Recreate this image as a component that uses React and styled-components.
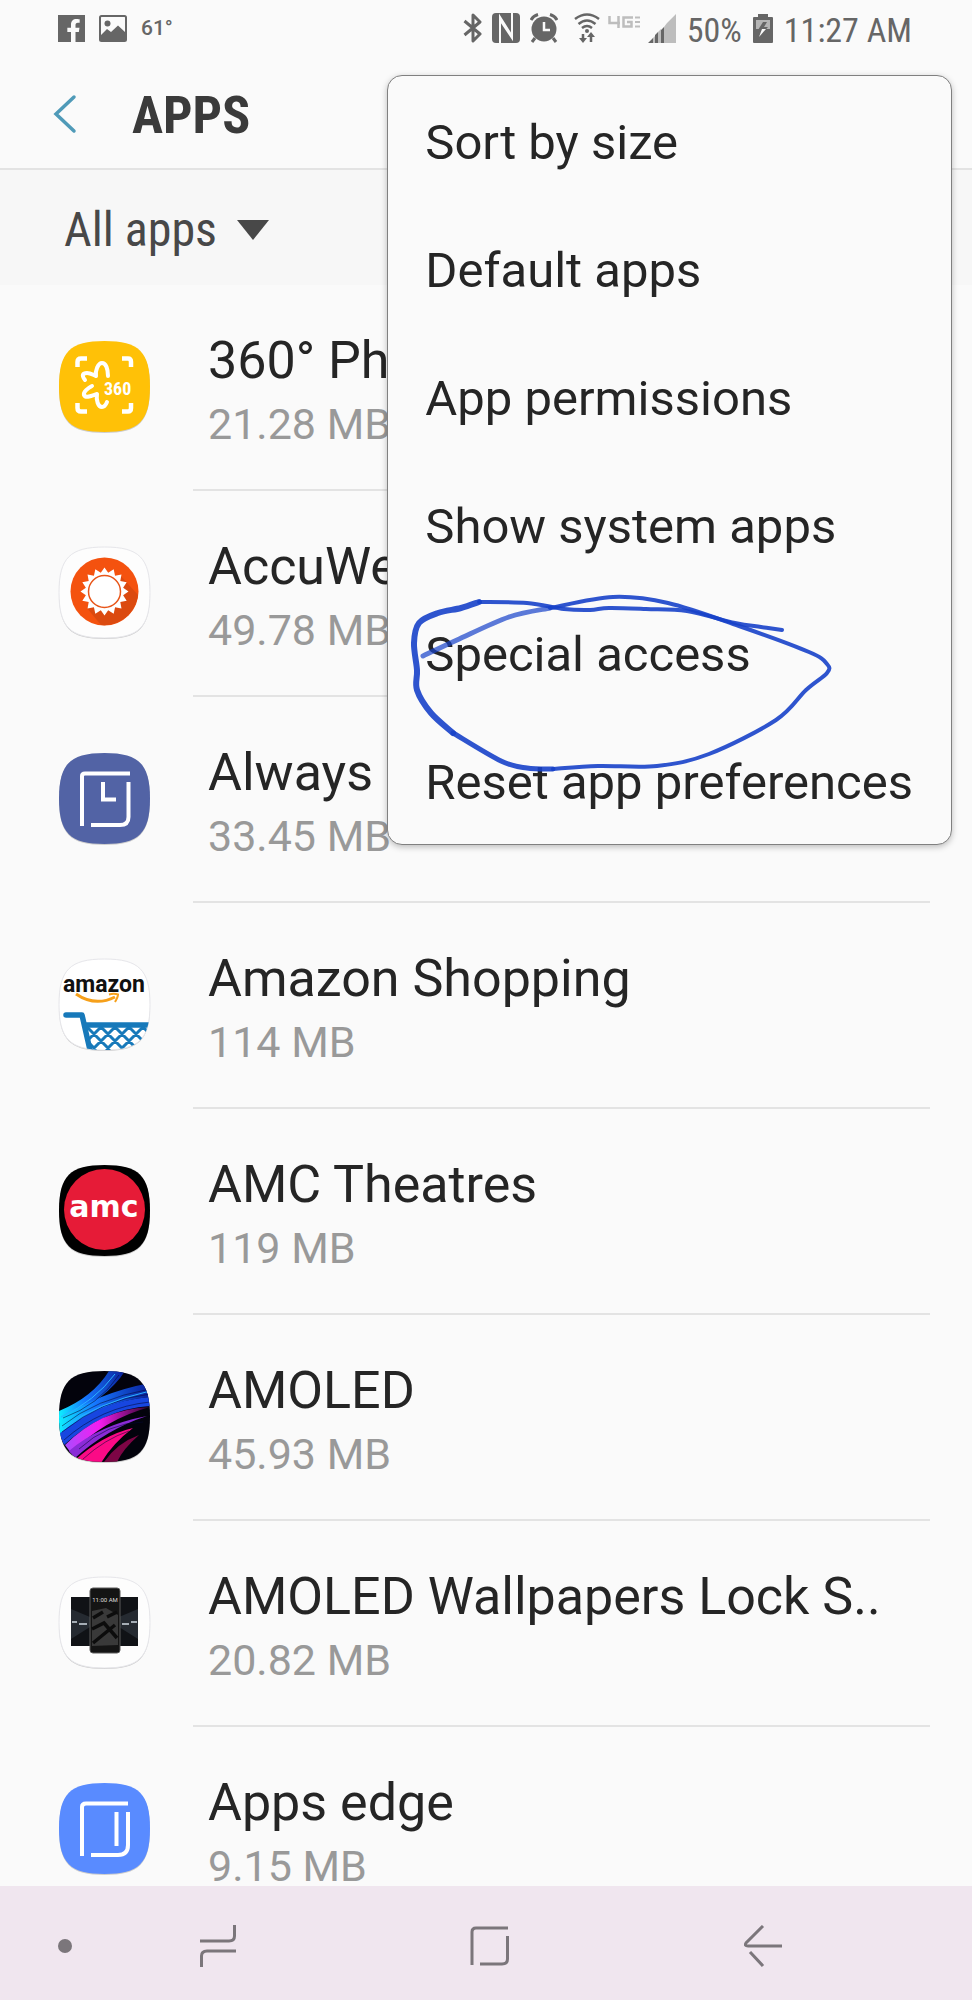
import React from 'react';
import styled, { createGlobalStyle } from 'styled-components';
import { FaFacebookF } from 'react-icons/fa';

const GlobalStyle = createGlobalStyle`
  * {
    box-sizing: border-box;
  }

  body {
    margin: 0;
    background-color: #fafafa;
    font-family: Roboto, "Liberation Sans", sans-serif;
    color: #252525;
  }

  button {
    border: 0;
    padding: 0;
    background: none;
    font: inherit;
    color: inherit;
    text-align: left;
    cursor: pointer;
  }
`;

const Screen = styled.div`
  position: relative;
  display: flex;
  flex-direction: column;
  height: 100vh;
  overflow: hidden;
`;

const StatusBar = styled.div`
  display: flex;
  align-items: center;
  justify-content: space-between;
  flex-shrink: 0;
  height: 56px;
  padding: 0 60px 0 58px;
  color: #666;
`;

const StatusGroup = styled.div`
  display: flex;
  align-items: center;
  gap: ${(props) => props.$gap};
`;

const FacebookBadge = styled.span`
  display: flex;
  align-items: flex-end;
  justify-content: flex-end;
  width: 27px;
  height: 27px;
  background-color: #666;
  color: #fafafa;
  overflow: hidden;
`;

const Temperature = styled.span`
  font-size: 21px;
  font-weight: 500;
`;

const StatusText = styled.span`
  padding-top: 3px;
  font-family: "Roboto Condensed", Roboto, sans-serif;
  font-size: 34px;
  line-height: 40px;
`;

const Header = styled.header`
  display: flex;
  align-items: center;
  gap: 55px;
  flex-shrink: 0;
  height: 114px;
  padding: 4px 52px 0;
  border-bottom: 2px solid #e3e3e3;
`;

const BackButton = styled.button`
  display: flex;
`;

const Title = styled.h1`
  margin: 0;
  padding-top: 4px;
  font-family: "Roboto Condensed", Roboto, sans-serif;
  font-size: 52px;
  font-weight: 700;
  line-height: 60px;
  color: #3a3a3a;
`;

const FilterBar = styled.div`
  display: flex;
  align-items: center;
  flex-shrink: 0;
  height: 115px;
  padding: 4px 64px 0;
  background-color: #f7f7f7;
`;

const FilterButton = styled.button`
  display: flex;
  align-items: center;
  gap: 20px;
  font-family: "Roboto Condensed", Roboto, sans-serif;
  font-size: 48px;
  line-height: 60px;
  color: #484848;
`;

const AppList = styled.ul`
  flex: 1;
  min-height: 0;
  margin: 0;
  padding: 0;
  list-style: none;
  overflow: hidden;
`;

const AppRow = styled.li`
  display: flex;
  height: 206px;
  padding: 0 42px 0 54px;
`;

const IconCell = styled.div`
  flex: 0 0 139px;
  padding-top: 52px;
`;

const AppText = styled.div`
  flex: 1;
  min-width: 0;
  padding: 44px 0 0 15px;
  border-bottom: 2px solid #e3e3e3;
  white-space: nowrap;
`;

const AppName = styled.div`
  font-size: 52px;
  line-height: 64px;
`;

const AppSize = styled.div`
  margin-top: 11px;
  font-size: 43px;
  line-height: 40px;
  color: #999;
`;

const Menu = styled.div`
  position: absolute;
  top: 75px;
  right: 20px;
  padding: 0 37px;
  border: 1px solid #808080;
  border-radius: 15px;
  background-color: #fafafa;
  box-shadow: 0 2px 6px rgba(0, 0, 0, 0.25);
`;

const MenuItem = styled.button`
  display: block;
  width: 100%;
  height: 128px;
  padding: 5px 1px 0 0;
  font-size: 49px;
  line-height: 60px;
  white-space: nowrap;
`;

const Scribble = styled.svg`
  position: absolute;
  top: 0;
  left: 0;
  pointer-events: none;
`;

const NavBar = styled.nav`
  display: grid;
  grid-template-columns: 82px 1fr 1fr 1fr 73px;
  align-items: center;
  flex-shrink: 0;
  height: 114px;
  padding-top: 6px;
  background-color: #f0e6ef;
`;

const NavButton = styled.button`
  display: flex;
  justify-content: ${(props) => (props.$end ? 'flex-end' : 'center')};
  padding-right: ${(props) => (props.$end ? '10px' : '0')};
`;

const squircle =
  'M45.5 0C80 0 91 11 91 45.5S80 91 45.5 91 0 80 0 45.5 11 0 45.5 0Z';

function AppIcon({ id, fill, outline, children }) {
  return (
    <svg width="100" height="100" viewBox="-5 -4 100 100" aria-hidden="true">
      <defs>
        <clipPath id={id}>
          <path d={squircle} />
        </clipPath>
      </defs>
      <path d={squircle} fill="#000" opacity="0.18" transform="translate(0 1)" />
      <path d={squircle} fill={fill} stroke={outline ? '#e6e6ea' : 'none'} />
      <g clipPath={`url(#${id})`}>{children}</g>
    </svg>
  );
}

function PhotoIcon() {
  return (
    <AppIcon id="photo" fill="#ffc107">
      <g fill="none" stroke="#fff" strokeWidth="4.5">
        <path d="M18.500 26V21Q18.500 17.500 22 17.500H28M63 17.500H69Q72 17.500 72 21V26M72 62V67Q72 70.500 69 70.500H63M28 70.500H22Q18.500 70.500 18.500 67V62" />
        <path
          strokeLinecap="round"
          strokeLinejoin="round"
          strokeWidth="4"
          d="M26 39C22 34 24 32 28 32C32 32 34 34 37 35C36 30 39 22 43 22C47 22 49 28 49 35M33 45C29 47 24 51 25 54C27 58 34 54 38 53C37 59 39 66 43 66Q46 66 48 61"
        />
      </g>
      <text x="45" y="54" fontSize="18" fontWeight="700" fill="#fff" fontFamily="Roboto Condensed, Roboto, sans-serif">
        360
      </text>
    </AppIcon>
  );
}

function WeatherIcon() {
  const rays = [];
  for (let i = 0; i < 32; i++) {
    const r = i % 2 ? 19 : 24;
    const a = (i * Math.PI) / 16;
    rays.push(`${45.5 + r * Math.sin(a)},${44.5 - r * Math.cos(a)}`);
  }
  return (
    <AppIcon id="weather" fill="#fdfdfd" outline>
      <circle cx="45.500" cy="44.500" r="34" fill="#f4520f" />
      <path d="M61 28L79 48A34 34 0 0 1 42 78L28 61Z" fill="#db4a10" />
      <polygon points={rays.join(' ')} fill="#fff" />
      <circle cx="45.500" cy="44.500" r="16" fill="#fff" stroke="#e8561a" strokeWidth="1.500" />
    </AppIcon>
  );
}

function DisplayIcon() {
  return (
    <AppIcon id="display" fill="#5263a5">
      <g fill="none" stroke="#fff" strokeWidth="4">
        <path d="M23 73V23Q23 20.500 26 20.500H71M69.500 29V64Q69.500 72 61 72H32M44 29V46.500H57" />
      </g>
    </AppIcon>
  );
}

function AmazonIcon() {
  return (
    <AppIcon id="amazon" fill="#fff" outline>
      <text x="4" y="33" fontSize="23" fontWeight="700" fill="#111" fontFamily="Roboto, sans-serif">
        amazon
      </text>
      <path d="M17 35Q36 48 56 38" fill="none" stroke="#f6a01a" strokeWidth="3" />
      <path d="M50 35.500Q55 34 59 35.500Q59 38 56 43" fill="none" stroke="#f6a01a" strokeWidth="2" />
      <path d="M7 56H23L31 91M27 66H92" fill="none" stroke="#1779ba" strokeWidth="5.500" strokeLinecap="round" strokeLinejoin="round" />
      <path
        d="M28 68L51 91M42 68L65 91M56 68L79 91M70 68L91 89M84 68L91 75M42 68L30 80M56 68L33 91M70 68L47 91M84 68L61 91M92 74L75 91M30 84L37 91"
        fill="none"
        stroke="#1779ba"
        strokeWidth="3"
      />
    </AppIcon>
  );
}

function AmcIcon() {
  return (
    <AppIcon id="amc" fill="#000">
      <circle cx="45.500" cy="44.500" r="40.500" fill="#e61b37" />
      <text x="45" y="52" fontSize="30" fontWeight="700" fill="#fff" textAnchor="middle" fontFamily="DejaVu Sans, sans-serif">
        amc
      </text>
    </AppIcon>
  );
}

function AmoledIcon() {
  return (
    <AppIcon id="amoled" fill="#03030c">
      <defs>
        <linearGradient id="blue" x1="0" x2="1">
          <stop offset="0" stopColor="#0df0ff" />
          <stop offset="0.4" stopColor="#1676ff" />
          <stop offset="1" stopColor="#0a1f98" />
        </linearGradient>
        <linearGradient id="pink" x1="0" x2="1">
          <stop offset="0" stopColor="#a84cff" />
          <stop offset="0.4" stopColor="#f61cf0" />
          <stop offset="1" stopColor="#2a0428" />
        </linearGradient>
      </defs>
      <path d="M0 40Q34 26 50 0H66Q50 26 0 52Z" fill="url(#blue)" />
      <path d="M0 49Q38 22 91 12V26Q40 30 0 66Z" fill="url(#blue)" />
      <path d="M0 63Q40 30 91 26V35Q44 38 5 74Z" fill="#1746e0" />
      <path d="M6 74Q42 38 91 36Q46 48 12 82Z" fill="url(#pink)" />
      <path d="M10 80Q40 54 88 45Q48 58 16 87Z" fill="#8a2bd6" />
      <path d="M16 89Q44 64 74 57Q54 72 42 92Z" fill="#fb0a86" />
      <path d="M45 91Q58 72 80 64Q64 78 58 91Z" fill="#7d0545" />
      <g fill="none" stroke="#050a35" opacity="0.55">
        <path d="M4 47Q40 34 60 4M3 55Q36 28 91 18M3 61Q44 28 91 23M5 69Q42 36 91 31M20 78Q48 52 84 51M24 88Q46 68 70 60" />
      </g>
      <path d="M2 46Q36 30 56 3M4 57Q38 32 91 20" fill="none" stroke="#2bb4ff" />
    </AppIcon>
  );
}

function WallpaperIcon() {
  return (
    <AppIcon id="wallpaper" fill="#fdfdfd" outline>
      <rect x="12" y="20" width="67" height="49" fill="#101216" />
      <path d="M12 32L31 40V50L12 62M79 32L60 40V50L79 62" fill="#252a31" />
      <path d="M13 45H18M20 47H28M63 47H70M72 45H78" stroke="#a5adb5" strokeWidth="2" />
      <rect x="31" y="11" width="30" height="65" rx="3" fill="#141414" stroke="#5a5a5a" />
      <path d="M33 34L47 31L59 38V68L33 69Z" fill="#393939" />
      <path d="M33 52L45 46L58 61M34 66L56 48M34 41L44 35M48 40L58 35" fill="none" stroke="#0c0c0c" strokeWidth="3.500" />
      <text x="46" y="25" fontSize="6" fill="#ddd" textAnchor="middle" fontFamily="Roboto, sans-serif">
        11:00 AM
      </text>
    </AppIcon>
  );
}

function EdgeIcon() {
  return (
    <AppIcon id="edge" fill="#598bff">
      <path
        d="M23 73V24Q23 20.500 27 20.500H69M69 29V62Q69 72 59 72H32M57.500 29V63"
        fill="none"
        stroke="#fff"
        strokeWidth="4"
      />
    </AppIcon>
  );
}

function PictureIcon() {
  return (
    <svg width="28" height="27" viewBox="0 0 28 27">
      <rect x="1" y="1" width="26" height="25" rx="1.500" fill="none" stroke="#666" strokeWidth="2" />
      <circle cx="8.500" cy="8.500" r="3" fill="#666" />
      <path d="M2 20L8 14L12 17L19 10.500L26 17V26H2Z" fill="#666" />
    </svg>
  );
}

function BluetoothIcon() {
  return (
    <svg width="19" height="30" viewBox="0 0 19 30">
      <path
        d="M1.500 8L17 21L10 28V2L17 9L1.500 22"
        fill="none"
        stroke="#666"
        strokeWidth="3"
        strokeLinejoin="round"
      />
    </svg>
  );
}

function NfcIcon() {
  return (
    <svg width="28" height="30" viewBox="0 0 28 30">
      <rect width="28" height="30" rx="4" fill="#666" />
      <path d="M8 30V4L20 23M20 0V25L8 7" fill="none" stroke="#fafafa" strokeWidth="2" />
    </svg>
  );
}

function AlarmIcon() {
  return (
    <svg width="28" height="30" viewBox="0 0 28 30">
      <circle cx="14" cy="16" r="12.500" fill="#666" />
      <path d="M1 7Q3 3 8 1.500M20 1.500Q25 3 27 7M5 25L2 29M23 25L26 29" fill="none" stroke="#666" strokeWidth="3" />
      <path d="M14 9V17H20" fill="none" stroke="#fafafa" strokeWidth="2.500" />
    </svg>
  );
}

function WifiIcon() {
  return (
    <svg width="26" height="30" viewBox="0 0 26 30">
      <g fill="none" stroke="#666" strokeWidth="2.500">
        <path d="M1 6Q13 -3 25 6M4.500 11Q13 4 21.500 11M8 15Q13 11 18 15" />
        <path d="M9 21V27M17 23V29" />
      </g>
      <circle cx="13" cy="18" r="2" fill="#666" />
      <path d="M5 25H13L9 30ZM13 24H21L17 19Z" fill="#666" />
    </svg>
  );
}

function NetworkIcon() {
  return (
    <svg width="32" height="30" viewBox="0 0 32 30">
      <g fill="none" stroke="#bdbdbd" strokeWidth="2.500">
        <path d="M1.500 3V10H12M10.500 3V15M25 4.500H15.500V13.500H23.500V9H19" />
        <path d="M27 4.500H32M27 9H32M27 13.500H32" strokeWidth="2" />
      </g>
    </svg>
  );
}

function SignalIcon() {
  return (
    <svg width="28" height="29" viewBox="0 0 28 29">
      <path d="M0 29L5 24V29ZM7 29V21L10 18V29ZM13 29V16L16 13V29Z" fill="#666" />
      <path d="M5 24L7 22V29H5ZM10 18L13 15V29H10ZM16 13L19 9V29H16ZM19 9L28 0V29H19Z" fill="#bdbdbd" />
    </svg>
  );
}

function BatteryIcon() {
  return (
    <svg width="20" height="29" viewBox="0 0 20 29">
      <path d="M0 4Q0 3 1 3H5V0H15V3H19Q20 3 20 4V28Q20 29 19 29H1Q0 29 0 28Z" fill="#666" />
      <path d="M3 6H17V15H3Z" fill="#b5b5b5" />
      <path d="M10 8L5 16H9L6 23L15 13H11L14 8Z" fill="#666" />
      <path d="M9 15H13L6 23Z" fill="#fafafa" />
    </svg>
  );
}

// pen strokes, in the coordinates of the menu
const strokes = [
  { width: 4, points: [[396, 554], [375, 551], [349, 547], [301, 535], [260, 533], [223, 532], [204, 534], [178, 533], [141, 527], [93, 526]] },
  { width: 6, points: [[93, 526], [75, 532], [52, 537], [33, 547], [28, 567], [31, 594], [31, 614], [45, 637], [67, 657]] },
  { width: 5, points: [[67, 657], [115, 685], [141, 692], [167, 693]] },
  { width: 4, points: [[167, 693], [212, 690], [271, 690], [323, 678], [390, 644], [420, 614], [441, 597], [441, 588], [423, 576], [353, 550], [282, 527], [227, 521], [164, 532]] },
  { width: 5, faint: true, points: [[164, 532], [123, 541], [71, 564], [37, 580]] },
];

function toPath(points) {
  let d = `M${points[0]}`;
  for (let i = 0; i < points.length - 1; i++) {
    const p0 = points[i - 1] || points[i];
    const p1 = points[i];
    const p2 = points[i + 1];
    const p3 = points[i + 2] || p2;
    d += `C${p1[0] + (p2[0] - p0[0]) / 6},${p1[1] + (p2[1] - p0[1]) / 6} `;
    d += `${p2[0] - (p3[0] - p1[0]) / 6},${p2[1] - (p3[1] - p1[1]) / 6} ${p2}`;
  }
  return d;
}

const apps = [
  { name: '360° Photo', size: '21.28 MB', Icon: PhotoIcon },
  { name: 'AccuWeather', size: '49.78 MB', Icon: WeatherIcon },
  { name: 'Always On', size: '33.45 MB', Icon: DisplayIcon },
  { name: 'Amazon Shopping', size: '114 MB', Icon: AmazonIcon },
  { name: 'AMC Theatres', size: '119 MB', Icon: AmcIcon },
  { name: 'AMOLED', size: '45.93 MB', Icon: AmoledIcon },
  { name: 'AMOLED Wallpapers Lock S..', size: '20.82 MB', Icon: WallpaperIcon },
  { name: 'Apps edge', size: '9.15 MB', Icon: EdgeIcon },
];

const menuItems = [
  'Sort by size',
  'Default apps',
  'App permissions',
  'Show system apps',
  'Special access',
  'Reset app preferences',
];

function App() {
  return (
    <>
      <GlobalStyle />
      <Screen>
        <StatusBar>
          <StatusGroup $gap="14px">
            <FacebookBadge>
              <FaFacebookF size={23} />
            </FacebookBadge>
            <PictureIcon />
            <Temperature>61°</Temperature>
          </StatusGroup>
          <StatusGroup $gap="11px">
            <StatusGroup $gap="16px">
              <StatusGroup $gap="10px">
                <BluetoothIcon />
                <NfcIcon />
                <AlarmIcon />
              </StatusGroup>
              <StatusGroup $gap="8px">
                <WifiIcon />
                <NetworkIcon />
                <SignalIcon />
              </StatusGroup>
            </StatusGroup>
            <StatusText>50%</StatusText>
            <BatteryIcon />
            <StatusText>11:27 AM</StatusText>
          </StatusGroup>
        </StatusBar>
        <Header>
          <BackButton aria-label="Back">
            <svg width="25" height="40" viewBox="0 0 25 40">
              <path d="M22 3L4 20L22 37" fill="none" stroke="#4f9ab8" strokeWidth="3.500" strokeLinecap="round" />
            </svg>
          </BackButton>
          <Title>APPS</Title>
        </Header>
        <FilterBar>
          <FilterButton>
            All apps
            <svg width="32" height="20" viewBox="0 0 32 20">
              <path d="M0 0H32L16 20Z" fill="#484848" />
            </svg>
          </FilterButton>
        </FilterBar>
        <AppList>
          {apps.map(({ name, size, Icon }) => (
            <AppRow key={name}>
              <IconCell>
                <Icon />
              </IconCell>
              <AppText>
                <AppName>{name}</AppName>
                <AppSize>{size}</AppSize>
              </AppText>
            </AppRow>
          ))}
        </AppList>
        <NavBar>
          <NavButton $end aria-label="Hide navigation bar">
            <svg width="14" height="14" viewBox="0 0 14 14">
              <circle cx="7" cy="7" r="7" fill="#7b767b" />
            </svg>
          </NavButton>
          <NavButton aria-label="Recent apps">
            <svg width="38" height="42" viewBox="0 0 38 42" fill="none" stroke="#7b767b" strokeWidth="3">
              <path d="M35.500 0V11Q35.500 16 30 16H1M2.500 42V31Q2.500 26 8 26H37" />
            </svg>
          </NavButton>
          <NavButton aria-label="Home">
            <svg width="40" height="40" viewBox="0 0 40 40" fill="none" stroke="#7b767b" strokeWidth="3">
              <path d="M2 39V6Q2 2 6 2H38M37.500 10V33Q37.500 38 32 38H10" />
            </svg>
          </NavButton>
          <NavButton aria-label="Back">
            <svg width="38" height="42" viewBox="0 0 38 42" fill="none" stroke="#7b767b" strokeWidth="3">
              <path d="M19 1L2 18Q0 21 4 21H38M6 27L19 41" />
            </svg>
          </NavButton>
        </NavBar>
        <Menu>
          {menuItems.map((item) => (
            <MenuItem key={item}>{item}</MenuItem>
          ))}
          <Scribble width="460" height="710" viewBox="2 0 460 710" fill="none" stroke="#1741c9" strokeLinecap="round" aria-hidden="true">
            {strokes.map((stroke, i) => (
              <path key={i} d={toPath(stroke.points)} strokeWidth={stroke.width} opacity={stroke.faint ? 0.7 : 0.9} />
            ))}
          </Scribble>
        </Menu>
      </Screen>
    </>
  );
}

export default App;
